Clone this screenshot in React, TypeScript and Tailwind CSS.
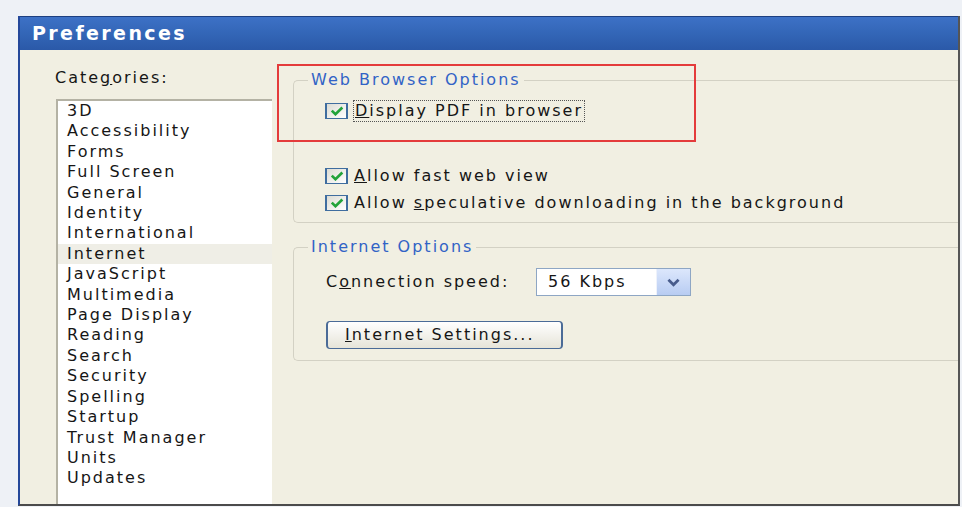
import React from "react";

const categories = [
  "3D",
  "Accessibility",
  "Forms",
  "Full Screen",
  "General",
  "Identity",
  "International",
  "Internet",
  "JavaScript",
  "Multimedia",
  "Page Display",
  "Reading",
  "Search",
  "Security",
  "Spelling",
  "Startup",
  "Trust Manager",
  "Units",
  "Updates",
];

const selected = "Internet";

function CheckBox() {
  return (
    <span className="flex h-[16px] w-[23px] shrink-0 items-center justify-center border border-x-2 border-[#3f6d9f] bg-gradient-to-br from-[#dddcd4] to-white">
      <svg viewBox="0 0 12 9" className="h-[10px] w-[14px]">
        <path d="M1.3 4.2 L4.6 7.4 L10.8 1.4" stroke="#22a33a" strokeWidth="2.4" fill="none" />
      </svg>
    </span>
  );
}

function GroupBox({ title, className, children }: { title: string; className?: string; children: React.ReactNode }) {
  return (
    <fieldset className={`rounded-l-[5px] border border-r-0 border-[#d3d1c4] pl-[14px] ${className ?? ""}`}>
      <legend className="px-[3px] leading-[20px] text-[#3163c6]">{title}</legend>
      {children}
    </fieldset>
  );
}

export default function App() {
  return (
    <div
      className="relative flex h-[507px] w-[962px] bg-[#eef1f6] pb-px pl-[18px] pr-[2px] pt-[16px] text-[16px] tracking-[2px] text-[#161616]"
      style={{ fontFamily: '"DejaVu Sans", Verdana, sans-serif' }}
    >
      <div className="flex flex-1 flex-col border-b-2 border-l-2 border-r-2 border-b-[#4b4b4b] border-l-[#24489a] border-r-[#555555] bg-[#f1efe2]">
        {/* title bar */}
        <div className="flex h-[34px] items-center border-t border-[#1d3f80] bg-gradient-to-b from-[#3d71c6] via-[#3366b7] to-[#2b59a8] pl-[12px] text-[19px] font-bold tracking-[2.4px] text-white">
          Preferences
        </div>

        <div className="flex min-h-0 flex-1 overflow-hidden">
          {/* categories */}
          <div className="flex w-[252px] shrink-0 flex-col pl-[35px] pt-[18px]">
            <div className="leading-[20px]">
              Cate<span className="underline">g</span>ories:
            </div>
            <ul className="ml-px mt-[11px] flex-1 border-l-2 border-t-2 border-[#b4b2a4] bg-white">
              {categories.map((c) => (
                <li
                  key={c}
                  className={`px-[9px] leading-[20.4px] ${c === selected ? "bg-[#efeee6]" : ""}`}
                >
                  {c}
                </li>
              ))}
            </ul>
          </div>

          {/* options */}
          <div className="flex flex-1 flex-col pl-[21px] pt-[20px]">
            <GroupBox title="Web Browser Options" className="pb-[8px] pt-[10px]">
              <div className="flex flex-col pl-[17px]">
                <div className="flex h-[22px] items-center gap-[5px]">
                  <CheckBox />
                  <span className="border border-dotted border-[#555] pl-px pr-px leading-[20px]">
                    <span className="underline">D</span>isplay PDF in browser
                  </span>
                </div>
                <div className="mt-[43px] flex h-[22px] items-center gap-[6px]">
                  <CheckBox />
                  <span>
                    <span className="underline">A</span>llow fast web view
                  </span>
                </div>
                <div className="mt-[5px] flex h-[22px] items-center gap-[6px]">
                  <CheckBox />
                  <span>
                    Allow <span className="underline">s</span>peculative downloading in the background
                  </span>
                </div>
              </div>
            </GroupBox>

            <GroupBox title="Internet Options" className="mt-[14px] pb-[11px] pt-[11px]">
              <div className="flex flex-col pl-[18px]">
                <div className="flex h-[28px] items-center">
                  <span className="w-[210px]">
                    C<span className="underline">o</span>nnection speed:
                  </span>
                  <div className="flex h-[28px] w-[155px] items-stretch border border-[#8ea6c4] bg-white">
                    <span className="flex flex-1 items-center pl-[11px]">56 Kbps</span>
                    <span className="flex w-[34px] items-center justify-center border-l border-[#eef2fb] bg-gradient-to-b from-[#dce7fc] to-[#b8ccf2]">
                      <svg viewBox="0 0 12 8" className="h-[9px] w-[15px]">
                        <path d="M1.5 1.5 L6 6 L10.5 1.5" stroke="#485c8c" strokeWidth="2.4" fill="none" />
                      </svg>
                    </span>
                  </div>
                </div>
                <button className="mt-[25px] h-[28px] w-[237px] rounded-[4px] border border-x-2 border-[#4b6b97] bg-gradient-to-b from-white to-[#e6e4d8] pl-[17px] text-left">
                  <span className="underline">I</span>nternet Settings...
                </button>
              </div>
            </GroupBox>
          </div>
        </div>
      </div>

      {/* highlight annotation */}
      <div className="pointer-events-none absolute left-[277px] top-[64px] h-[78px] w-[419px] border-2 border-[#e43b3b]" />
    </div>
  );
}
